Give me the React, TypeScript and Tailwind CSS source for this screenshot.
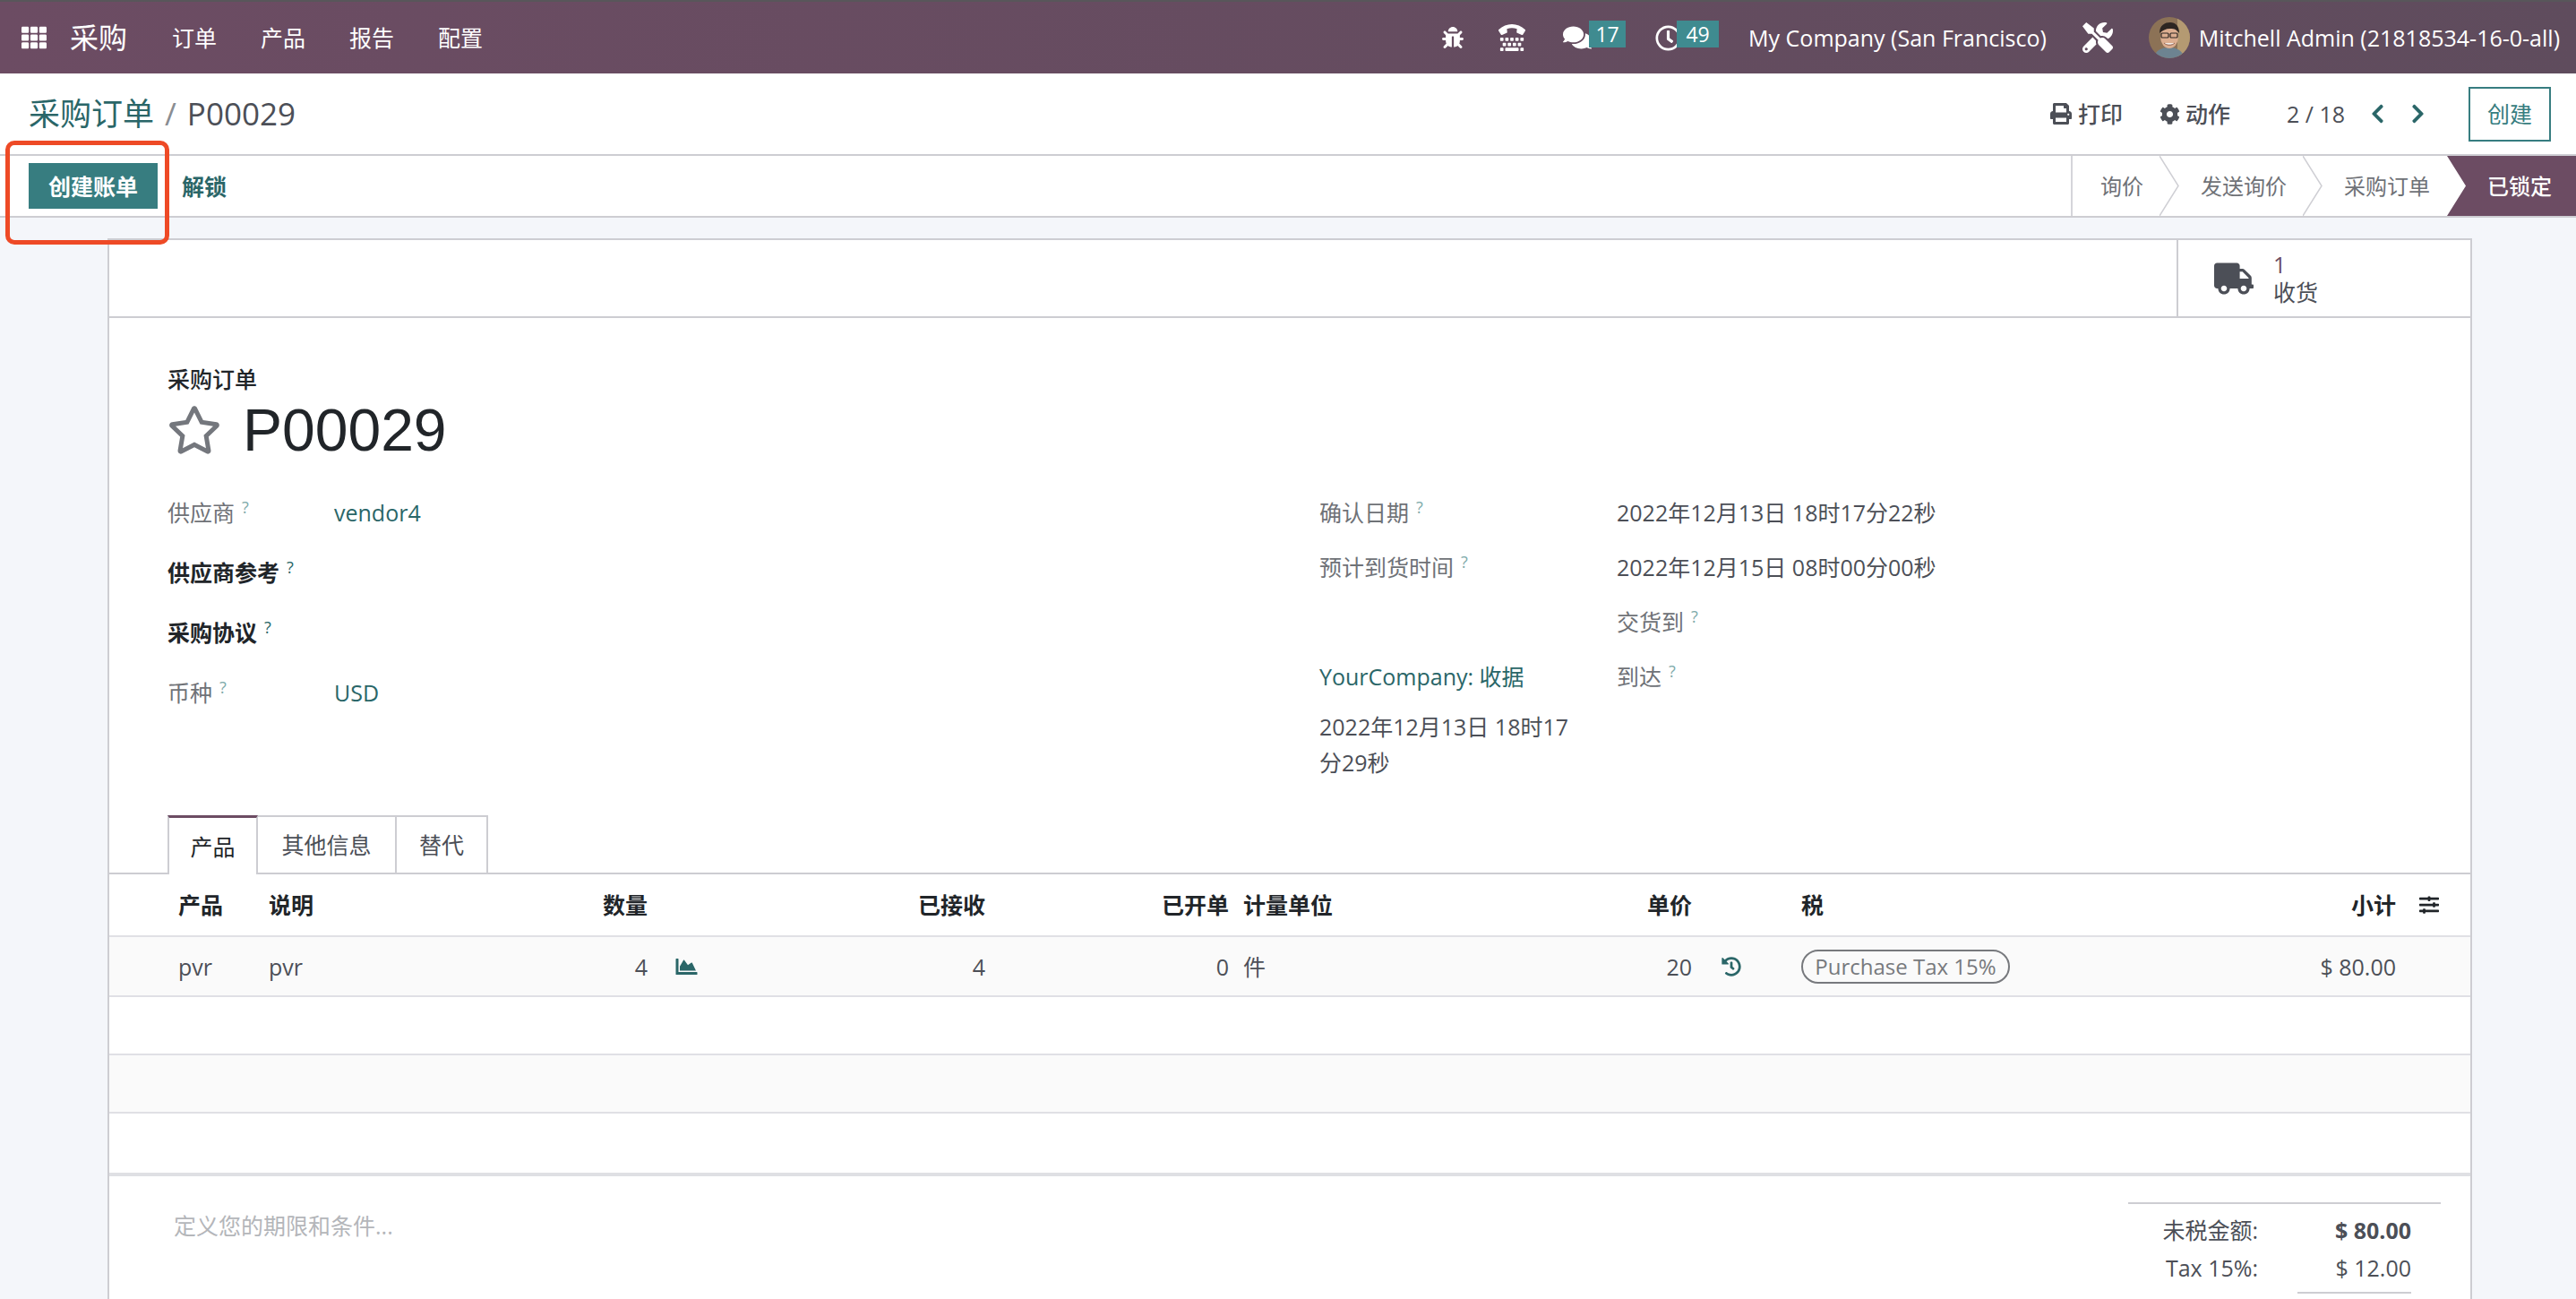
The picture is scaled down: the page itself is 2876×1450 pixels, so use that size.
import type { ReactNode } from 'react';
import {
  FaBug,
  FaChartArea,
  FaChevronLeft,
  FaChevronRight,
  FaCog,
  FaComments,
  FaHistory,
  FaPrint,
  FaRegClock,
  FaRegStar,
  FaSlidersH,
  FaTh,
  FaTools,
  FaTruck,
  FaTty,
} from 'react-icons/fa';

const tableCols =
  'grid grid-cols-[178px_260px_163px_77px_300px_272px_328px_189px_122px_389px_275px_83px] items-center';

function Avatar() {
  return (
    <svg viewBox="0 0 46 46" className="h-[48px] w-[46px] shrink-0">
      <defs>
        <clipPath id="avatar-clip">
          <circle cx="23" cy="23" r="23" />
        </clipPath>
      </defs>
      <g clipPath="url(#avatar-clip)">
        <rect width="46" height="46" fill="#8c7256" />
        <rect x="32" width="14" height="46" fill="#b49a72" />
        <path d="M6 46c1-9 8-12 17-12s15 4 17 12z" fill="#6d8391" />
        <ellipse cx="23" cy="22" rx="10" ry="13" fill="#dcae90" />
        <path d="M12 18c0-9 6-12 12-12s10 4 10 12c-3-4-5-5-10-5s-9 2-12 5z" fill="#2d2622" />
        <rect x="14" y="18" width="8" height="5" rx="1" fill="none" stroke="#2d2622" strokeWidth="1.2" />
        <rect x="24" y="18" width="8" height="5" rx="1" fill="none" stroke="#2d2622" strokeWidth="1.2" />
        <path d="M17 29c3 3 9 3 12 0" fill="#f4ece6" stroke="#7b4a3a" strokeWidth="0.8" />
      </g>
    </svg>
  );
}

function Hint({ dark }: { dark?: boolean }) {
  return (
    <sup className={`ml-[8px] text-[18px] font-normal ${dark ? 'text-[#2a6668]' : 'text-[#7fabab]'}`}>?</sup>
  );
}

function FieldRow({ label, dark, children }: { label: string; dark?: boolean; children?: ReactNode }) {
  return (
    <div className="flex h-[67px] items-center">
      <div className={`w-[186px] shrink-0 whitespace-nowrap ${dark ? 'font-semibold text-[#212529]' : 'text-[#6f7277]'}`}>
        {label}
        <Hint dark={dark} />
      </div>
      <div className="text-[#2a6668]">{children}</div>
    </div>
  );
}

function StepArrow() {
  return (
    <svg viewBox="0 0 22 68" preserveAspectRatio="none" className="h-full w-[22px] shrink-0">
      <polyline points="0,0 21,34 0,68" fill="none" stroke="#cfcfd4" strokeWidth="1.5" />
    </svg>
  );
}

export default function App() {
  return (
    <div className="relative h-[1450px] overflow-hidden bg-[#f4f6fa] font-['Open_Sans','Noto_Sans_CJK_SC',sans-serif] text-[25px] leading-[36px] text-[#4c4f57]">
      {/* Top navbar */}
      <header className="flex h-[82px] items-center border-t-2 border-[#58565a] bg-gradient-to-r from-[#6c4c63] to-[#5f4c5d] pl-[24px] text-white">
        <FaTh className="h-[28px] w-[28px]" />
        <span className="ml-[26px] text-[32px]">采购</span>
        <nav className="ml-[50px] flex gap-[49px]">
          <span>订单</span>
          <span>产品</span>
          <span>报告</span>
          <span>配置</span>
        </nav>
        <div className="ml-auto flex items-center pr-[18px]">
          <FaBug className="h-[24px] w-[24px]" />
          <FaTty className="ml-[39px] h-[30px] w-[30px]" />
          <FaComments className="ml-[42px] h-[30px] w-[32px]" />
          <span className="mb-[8px] ml-[-3px] flex h-[30px] w-[41px] items-center justify-center bg-[#3f8b90] text-[23px]">17</span>
          <FaRegClock className="ml-[33px] h-[29px] w-[29px]" />
          <span className="mb-[8px] ml-[-5px] flex h-[30px] w-[47px] items-center justify-center bg-[#3f8b90] text-[23px]">49</span>
          <span className="ml-[33px] whitespace-nowrap">My Company (San Francisco)</span>
          <FaTools className="ml-[40px] h-[34px] w-[34px]" />
          <div className="ml-[40px]">
            <Avatar />
          </div>
          <span className="ml-[10px] whitespace-nowrap">Mitchell Admin (21818534-16-0-all)</span>
        </div>
      </header>

      {/* Breadcrumb and pager */}
      <div className="flex h-[90px] items-center bg-white pl-[32px] pr-[28px]">
        <div className="text-[35px]">
          <span className="text-[#2a6668]">采购订单</span>
          <span className="mx-[12px] text-[#8a8d92]">/</span>
          <span>P00029</span>
        </div>
        <div className="ml-auto flex items-center">
          <FaPrint className="h-[24px] w-[24px]" />
          <span className="ml-[7px] font-medium">打印</span>
          <FaCog className="ml-[41px] h-[23px] w-[23px]" />
          <span className="ml-[6px] font-medium">动作</span>
          <span className="ml-[63px]">2 / 18</span>
          <FaChevronLeft className="ml-[28px] h-[24px] w-[17px] text-[#2a6668]" />
          <FaChevronRight className="ml-[28px] h-[24px] w-[17px] text-[#2a6668]" />
          <button className="ml-[48px] h-[61px] w-[92px] border-2 border-[#377d80] text-[#377d80]">创建</button>
        </div>
      </div>

      {/* Action buttons and status bar */}
      <div className="flex h-[71px] items-stretch border-y-2 border-[#cdcdd2] bg-white">
        <div className="flex items-center pl-[32px]">
          <button className="h-[51px] w-[144px] bg-[#377d80] font-semibold text-white">创建账单</button>
          <button className="ml-[27px] font-semibold text-[#2a6668]">解锁</button>
        </div>
        <div className="ml-auto flex items-stretch text-[24px] text-[#6f7277]">
          <div className="flex items-center border-l-2 border-[#d5d5da] pl-[31px]">询价</div>
          <div className="ml-[18px] flex">
            <StepArrow />
          </div>
          <div className="ml-[24px] flex items-center">发送询价</div>
          <div className="ml-[18px] flex">
            <StepArrow />
          </div>
          <div className="ml-[24px] flex items-center">采购订单</div>
          <div className="ml-[19px] flex w-[144px] items-center bg-[#6c4c63] pl-[45px] font-medium text-white [clip-path:polygon(0_0,100%_0,100%_100%,0_100%,21px_50%)]">
            已锁定
          </div>
        </div>
      </div>

      {/* Form sheet */}
      <main className="ml-[120px] mt-[23px] h-[1200px] w-[2640px] border-x-2 border-t-2 border-[#cdcdd2] bg-white">
        <div className="flex h-[87px] justify-end border-b-2 border-[#cdcdd2]">
          <div className="flex w-[328px] items-center border-l-2 border-[#cdcdd2] pl-[40px]">
            <FaTruck className="h-[36px] w-[44px]" />
            <div className="ml-[22px] leading-[31px]">
              <div className="text-[#6c4c63]">1</div>
              <div>收货</div>
            </div>
          </div>
        </div>

        <div className="pl-[65px] pt-[50px]">
          <div className="font-medium text-[#212529]">采购订单</div>
          <div className="flex h-[78px] items-center">
            <FaRegStar className="h-[58px] w-[60px] text-[#74777d]" />
            <h1 className="ml-[24px] font-['Liberation_Sans','Noto_Sans_CJK_SC',sans-serif] text-[66px] font-medium text-[#212529]">P00029</h1>
          </div>

          <div className="mt-[19px] flex h-[372px]">
            <div className="w-[1286px] shrink-0">
              <FieldRow label="供应商">vendor4</FieldRow>
              <FieldRow label="供应商参考" dark />
              <FieldRow label="采购协议" dark />
              <FieldRow label="币种">USD</FieldRow>
            </div>
            <div className="mt-[3px] grid grid-cols-[332px_1fr] auto-rows-[61px] items-center">
              <div className="text-[#6f7277]">确认日期<Hint /></div>
              <div>2022年12月13日 18时17分22秒</div>
              <div className="text-[#6f7277]">预计到货时间<Hint /></div>
              <div>2022年12月15日 08时00分00秒</div>
              <div />
              <div className="text-[#6f7277]">交货到<Hint /></div>
              <div className="text-[#2a6668]">YourCompany: 收据</div>
              <div className="text-[#6f7277]">到达<Hint /></div>
              <div className="mt-[30px] leading-[40px]">
                2022年12月13日 18时17
                <br />
                分29秒
              </div>
            </div>
          </div>
        </div>

        {/* Tabs */}
        <div className="flex h-[66px] border-b-2 border-[#cdcdd2] pl-[65px]">
          <div className="mb-[-2px] flex w-[101px] items-center justify-center border-x-2 border-t-[3px] border-[#cdcdd2] border-t-[#6c4c63] bg-white text-[#212529]">产品</div>
          <div className="flex w-[155px] items-center justify-center border-r-2 border-t-2 border-[#cdcdd2]">其他信息</div>
          <div className="flex w-[102px] items-center justify-center border-r-2 border-t-2 border-[#cdcdd2]">替代</div>
        </div>

        {/* Order lines */}
        <div className={`${tableCols} h-[70px] border-b-2 border-[#e0e0e5] font-semibold text-[#212529]`}>
          <div className="pl-[77px]">产品</div>
          <div>说明</div>
          <div className="text-right">数量</div>
          <div />
          <div className="text-right">已接收</div>
          <div className="text-right">已开单</div>
          <div className="pl-[16px]">计量单位</div>
          <div className="text-right">单价</div>
          <div />
          <div>税</div>
          <div className="text-right">小计</div>
          <div className="pl-[24px]">
            <FaSlidersH className="h-[22px] w-[26px]" />
          </div>
        </div>
        <div className={`${tableCols} h-[67px] border-b-2 border-[#e0e0e5] bg-[#fafafa]`}>
          <div className="pl-[77px]">pvr</div>
          <div>pvr</div>
          <div className="text-right">4</div>
          <div className="pl-[29px]">
            <FaChartArea className="h-[24px] w-[29px] text-[#2a6668]" />
          </div>
          <div className="text-right">4</div>
          <div className="text-right">0</div>
          <div className="pl-[16px]">件</div>
          <div className="text-right">20</div>
          <div className="pl-[33px]">
            <FaHistory className="h-[22px] w-[22px] text-[#2a6668]" />
          </div>
          <div>
            <span className="inline-flex h-[38px] w-[233px] items-center justify-center whitespace-nowrap rounded-full border-2 border-[#77797d] text-[24px] text-[#77797d]">
              Purchase Tax 15%
            </span>
          </div>
          <div className="text-right">$ 80.00</div>
          <div />
        </div>
        <div className="h-[65px] border-b-2 border-[#e0e0e5] bg-white" />
        <div className="h-[65px] border-b-2 border-[#e0e0e5] bg-[#fafafa]" />
        <div className="h-[70px] border-b-4 border-[#dfe0e4] bg-white" />

        {/* Terms and totals */}
        <div className="flex items-start justify-between">
          <div className="pl-[72px] pt-[37px] text-[#b4b6ba]">定义您的期限和条件...</div>
          <div className="mr-[33px] mt-[29px] w-[349px] border-t-2 border-[#cdcdd2] pt-[8px]">
            <div className="flex h-[42px] items-center">
              <div className="w-[145px] text-right">未税金额:</div>
              <div className="w-[171px] text-right font-bold">$ 80.00</div>
            </div>
            <div className="flex h-[42px] items-center">
              <div className="w-[145px] text-right">Tax 15%:</div>
              <div className="w-[171px] text-right">$ 12.00</div>
            </div>
            <div className="ml-[189px] mt-[6px] w-[127px] border-t-2 border-[#cdcdd2]" />
          </div>
        </div>
      </main>

      {/* Red highlight drawn over the screenshot */}
      <div className="absolute left-[6px] top-[157px] h-[116px] w-[183px] rounded-[10px] border-[5px] border-[#ee4a26]" />
    </div>
  );
}
